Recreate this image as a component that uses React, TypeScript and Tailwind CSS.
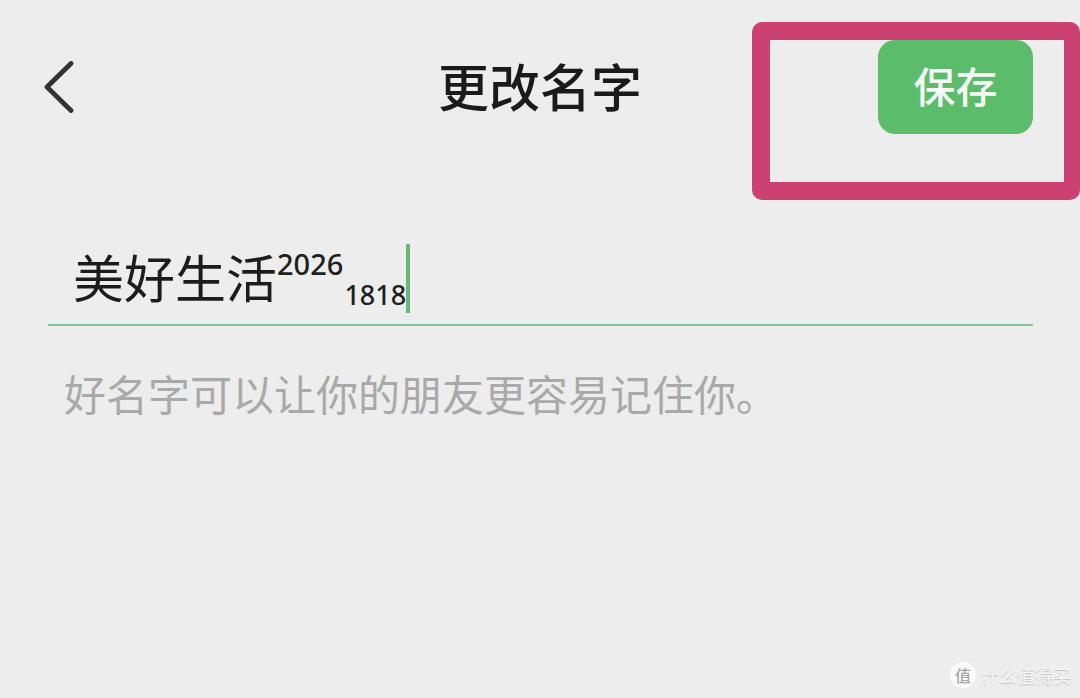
export default function App() {
  return (
    <div className="relative w-[1080px] h-[698px] overflow-hidden bg-[#ededed] font-['Noto_Sans_CJK_SC','Noto_Sans',sans-serif]">
      <header className="grid grid-cols-[1fr_auto_1fr] items-center pt-[40px] pl-[44px] pr-[47px]">
        <svg width="30" height="52" viewBox="0 0 30 52" fill="none" className="stroke-[#333333]">
          <path d="M27 2.500 L3 26 L27 49.500" strokeWidth="4.800" strokeLinecap="round" strokeLinejoin="round" />
        </svg>
        <h1 className="text-[51px] leading-[60px] mb-[5px] ml-[3px] font-medium text-[#1a1a1a]">更改名字</h1>
        <button className="justify-self-end w-[155px] h-[94px] rounded-[17px] bg-[#5bbd6b] text-[42px] leading-[50px] pb-[4px] font-medium text-[#f6fbf6]">
          保存
        </button>
      </header>

      <div className="ml-[48px] mt-[110px] w-[985px] h-[82px] border-b-2 border-[#82c68f] pl-[25px] flex">
        <span className="text-[51px] leading-[60px] mt-[2px] text-[#1c1c1c]">美好生活</span>
        <span className="text-[29px] leading-[34px] mt-[3px] font-medium font-['Noto_Sans',sans-serif] text-[#1f1f1f]">2026</span>
        <span className="text-[27px] leading-[34px] mt-[34px] ml-[1px] font-medium font-['Noto_Sans',sans-serif] text-[#1f1f1f]">1818</span>
        <span className="w-[4px] h-[69px] bg-[#66b976]" />
      </div>

      <p className="ml-[64px] mt-[37px] text-[42px] leading-[60px] text-[#a9a9a9]">好名字可以让你的朋友更容易记住你。</p>

      <div className="absolute left-[752px] top-[22px] w-[328px] h-[178px] rounded-[10px] border-[18px] border-r-[16px] border-[#cb4172]" />

      <div className="absolute left-[950px] top-[662px] flex items-center gap-[5px]">
        <span className="w-[26px] h-[26px] rounded-full bg-[#fbfbfb] text-[#a6a6a6] text-[16px] leading-[26px] text-center font-medium">值</span>
        <span className="text-[18px] leading-[26px] text-[#f8f8f8] [text-shadow:0_1px_1px_#bdbdbd]">什么值得买</span>
      </div>
    </div>
  );
}
